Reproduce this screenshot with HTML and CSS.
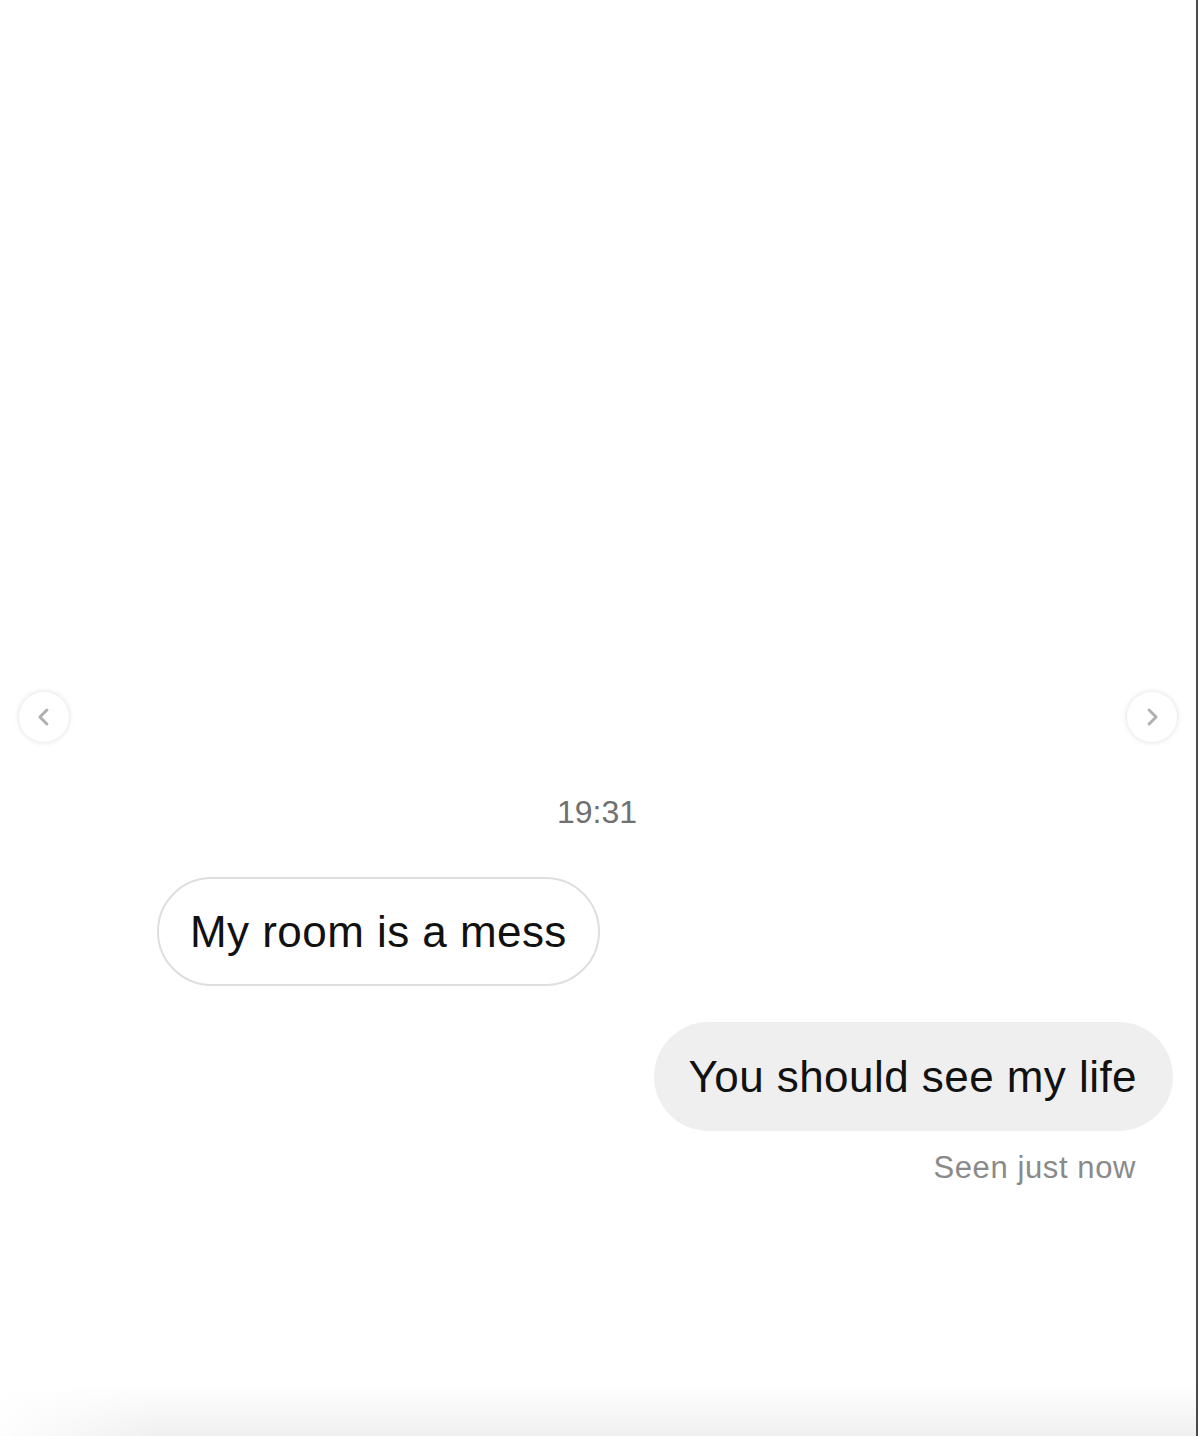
FILE: index.html
```html
<!DOCTYPE html>
<html lang="en">
<head>
<meta charset="utf-8">
<title>Chat</title>
<link rel="stylesheet" href="styles.css">
</head>
<body>
<div class="screen">
  <button class="nav nav-prev" aria-label="Previous">
    <svg viewBox="0 0 24 24" width="28" height="28"><path d="M14.5 6 L8.5 12 L14.5 18" fill="none" stroke="#b0b0b0" stroke-width="2.6" stroke-linecap="round" stroke-linejoin="round"/></svg>
  </button>
  <button class="nav nav-next" aria-label="Next">
    <svg viewBox="0 0 24 24" width="28" height="28"><path d="M9.5 6 L15.5 12 L9.5 18" fill="none" stroke="#b0b0b0" stroke-width="2.6" stroke-linecap="round" stroke-linejoin="round"/></svg>
  </button>

  <div class="thread">
    <div class="time">19:31</div>
    <div class="row row-in">
      <div class="bubble bubble-in">My room is a mess</div>
    </div>
    <div class="row row-out">
      <div class="bubble bubble-out">You should see my life</div>
    </div>
    <div class="seen">Seen just now</div>
  </div>
</div>
</body>
</html>
```

FILE: styles.css
```css
* { box-sizing: border-box; }

html, body {
  margin: 0;
  padding: 0;
  background: #ffffff;
}

body {
  font-family: "Liberation Sans", Arial, Helvetica, sans-serif;
  color: #111;
}

.screen {
  position: relative;
  width: 1198px;
  height: 1436px;
  border-right: 2px solid #4a4a4a;
  background:
    linear-gradient(to right, rgba(255,255,255,0.9) 0px, rgba(255,255,255,0) 160px),
    linear-gradient(to bottom, rgba(240,240,240,0) 1385px, rgba(238,238,238,0.9) 1436px),
    #ffffff;
  overflow: hidden;
}

.thread {
  display: flex;
  flex-direction: column;
  padding-top: 792px;
}

.time {
  text-align: center;
  font-size: 32px;
  line-height: 40px;
  color: #707070;
  padding-right: 2px;
}

.row {
  display: flex;
}

.row-in {
  margin-top: 45px;
  padding-left: 157px;
}

.row-out {
  margin-top: 36px;
  justify-content: flex-end;
  padding-right: 23px;
}

.bubble {
  font-size: 44px;
  line-height: 53px;
  letter-spacing: 0.45px;
  border-radius: 56px;
  white-space: nowrap;
  color: #111;
}

.bubble-in {
  border: 2px solid #dedede;
  background: #fff;
  padding: 26px 31px 26px 31px;
}

.bubble-out {
  background: #efefef;
  padding: 28px 36px 28px 34px;
}

.seen {
  align-self: flex-end;
  margin-right: 60px;
  margin-top: 17px;
  font-size: 31px;
  line-height: 40px;
  letter-spacing: 0.6px;
  color: #8a8a8a;
}

.nav {
  position: absolute;
  top: 692px;
  width: 50px;
  height: 50px;
  border-radius: 50%;
  border: none;
  padding: 0;
  background: #fff;
  box-shadow: 0 0 5px 1px rgba(0,0,0,0.10);
  display: flex;
  align-items: center;
  justify-content: center;
}

.nav-prev { left: 19px; }
.nav-next { left: 1127px; }
```
